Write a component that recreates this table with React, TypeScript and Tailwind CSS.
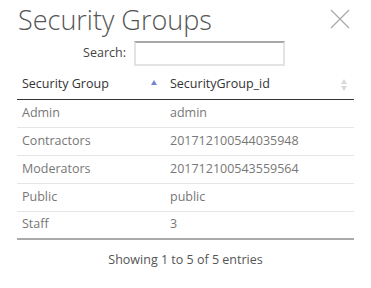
const rows = [
  { name: "Admin", id: "admin" },
  { name: "Contractors", id: "201712100544035948" },
  { name: "Moderators", id: "201712100543559564" },
  { name: "Public", id: "public" },
  { name: "Staff", id: "3" },
];

export default function App() {
  return (
    <div className="w-[371px] h-[288px] bg-white px-[17px] text-[12.5px] font-['Open_Sans',sans-serif]">
      <div className="flex justify-between items-start">
        <h1 className="mt-[0px] ml-[1px] text-[27px] font-light leading-[40px] text-[#555]">Security Groups</h1>
        <button className="mt-[9px] mr-[4px] w-[20px] h-[20px] text-[#aaa]">
          <svg viewBox="0 0 20 20" width="20" height="20" stroke="currentColor" strokeWidth="1.3" fill="none">
            <path d="M1 1 L19 19 M19 1 L1 19" />
          </svg>
        </button>
      </div>

      <div className="flex justify-center items-center gap-[8px] mt-[1px] pr-[3px]">
        <label className="text-[#444]">Search:</label>
        <input className="w-[151px] h-[25px] border-2 border-[#e3e3e3] border-t-[#a8a8a8] outline-none" />
      </div>

      <table className="w-full mt-[5px] border-collapse">
        <thead>
          <tr className="border-b border-[#333]">
            <th className="w-[148px] h-[28px] pl-[5px] text-left font-normal text-[#333] relative">
              Security Group
              <svg className="absolute right-[8px] top-[9px]" width="6" height="5" viewBox="0 0 6 5">
                <path d="M3 0 L6 5 L0 5 Z" fill="#7484d2" />
              </svg>
            </th>
            <th className="h-[28px] pl-[5px] text-left font-normal text-[#333] relative">
              SecurityGroup_id
              <svg className="absolute right-[7px] top-[8px]" width="6" height="12" viewBox="0 0 6 12">
                <path d="M3 0 L6 5 L0 5 Z M0 7 L6 7 L3 12 Z" fill="#d8d8d8" />
              </svg>
            </th>
          </tr>
        </thead>
        <tbody>
          {rows.map((r, i) => (
            <tr key={r.name} className={i === rows.length - 1 ? "border-b-2 border-[#aaa]" : "border-b border-[#e5e5e5]"}>
              <td className="h-[28px] pl-[5px] text-[#777]">{r.name}</td>
              <td className="h-[28px] pl-[5px] text-[#777]">{r.id}</td>
            </tr>
          ))}
        </tbody>
      </table>

      <div className="mt-[11px] text-center text-[#555]">Showing 1 to 5 of 5 entries</div>
    </div>
  );
}
